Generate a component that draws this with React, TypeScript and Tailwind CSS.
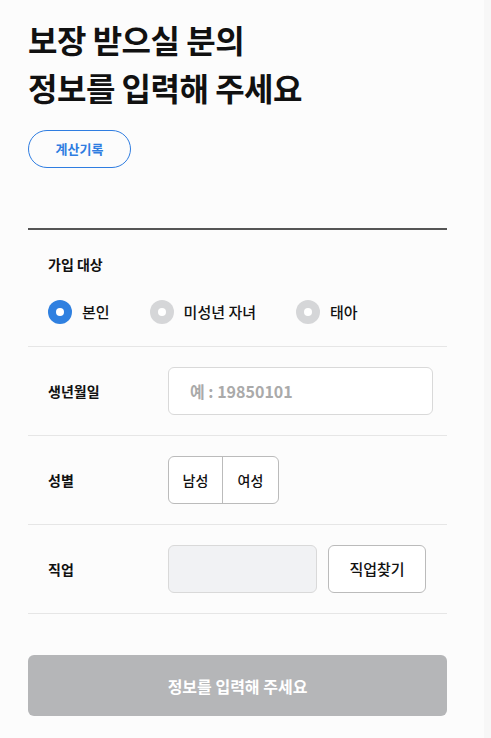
import { useState } from "react";

export default function App() {
  const [target, setTarget] = useState("self");
  const [gender, setGender] = useState<string | null>(null);

  const targets = [
    { id: "self", label: "본인" },
    { id: "minor", label: "미성년 자녀" },
    { id: "fetus", label: "태아" },
  ];

  return (
    <div
      className="min-h-[738px] w-[491px] bg-[#fcfcfc] flex"
      style={{ fontFamily: '"Noto Sans CJK KR", "Noto Sans", sans-serif' }}
    >
      <div className="w-[484px] pl-[28px] pr-[37px] pt-[15px]">
        {/* Header */}
        <h1 className="text-[32px] font-bold leading-[48px] text-[#111] tracking-[-0.5px]">
          보장 받으실 분의
          <br />
          정보를 입력해 주세요
        </h1>
        <button className="mt-[19px] h-[38px] w-[103px] rounded-full border border-[#2f7de1] text-[13px] font-bold text-[#2f7de1]">
          계산기록
        </button>

        <div className="mt-[60px] h-[2px] bg-[#555]" />

        {/* 가입 대상 */}
        <div className="border-b border-[#e6e6e6] px-[20px] pt-[24px] pb-[22px]">
          <p className="text-[14px] font-bold text-[#111] leading-[20px]">가입 대상</p>
          <div className="mt-[26px] flex items-center">
            {targets.map((t) => (
              <label
                key={t.id}
                className="mr-[40px] flex cursor-pointer items-center"
                onClick={() => setTarget(t.id)}
              >
                <span
                  className={
                    target === t.id
                      ? "flex h-[24px] w-[24px] items-center justify-center rounded-full bg-[#2f80e0]"
                      : "flex h-[24px] w-[24px] items-center justify-center rounded-full bg-[#d5d6d8]"
                  }
                >
                  <span className="h-[8px] w-[8px] rounded-full bg-white" />
                </span>
                <span className="ml-[10px] text-[15px] font-medium text-[#111]">{t.label}</span>
              </label>
            ))}
          </div>
        </div>

        {/* 생년월일 */}
        <div className="flex items-center border-b border-[#e6e6e6] py-[20px]">
          <span className="w-[140px] pl-[20px] text-[14px] font-bold text-[#111]">생년월일</span>
          <input
            className="h-[48px] w-[265px] rounded-[6px] border border-[#d9d9d9] bg-white px-[21px] text-[16px] font-semibold text-[#111] outline-none placeholder:text-[#aaa]"
            placeholder="예 : 19850101"
          />
        </div>

        {/* 성별 */}
        <div className="flex items-center border-b border-[#e6e6e6] py-[20px]">
          <span className="w-[140px] pl-[20px] text-[14px] font-bold text-[#111]">성별</span>
          <div className="flex h-[48px] overflow-hidden rounded-[6px] border border-[#bbb] bg-white">
            <button
              onClick={() => setGender("m")}
              className="w-[54px] border-r border-[#bbb] text-[14px] font-medium text-[#111]"
            >
              남성
            </button>
            <button
              onClick={() => setGender("f")}
              className="w-[55px] text-[14px] font-medium text-[#111]"
            >
              여성
            </button>
          </div>
          {gender && <span className="hidden">{gender}</span>}
        </div>

        {/* 직업 */}
        <div className="flex items-center border-b border-[#e6e6e6] py-[20px]">
          <span className="w-[140px] pl-[20px] text-[14px] font-bold text-[#111]">직업</span>
          <div className="h-[48px] w-[149px] rounded-[6px] border border-[#d9d9d9] bg-[#f1f2f4]" />
          <button className="ml-[11px] h-[48px] w-[98px] rounded-[6px] border border-[#bbb] bg-white text-[15px] font-medium text-[#111]">
            직업찾기
          </button>
        </div>

        {/* Submit */}
        <button className="mt-[41px] h-[61px] w-full rounded-[6px] bg-[#b5b6b8] text-[16px] font-bold text-white">
          정보를 입력해 주세요
        </button>
      </div>
      <div className="w-[7px] bg-[#f7f7f7]" />
    </div>
  );
}
